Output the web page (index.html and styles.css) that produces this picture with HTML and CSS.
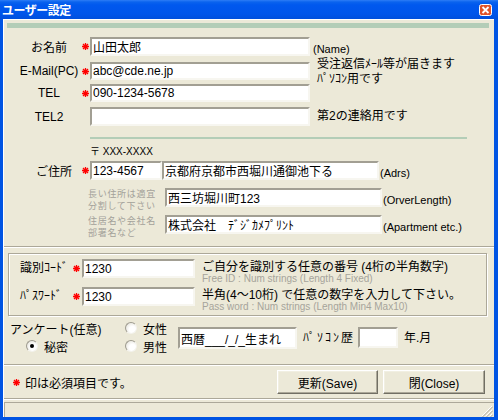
FILE: index.html
```html
<!DOCTYPE html>
<html lang="ja">
<head>
<meta charset="utf-8">
<title>ユーザー設定</title>
<link rel="stylesheet" href="styles.css">
</head>
<body>
<div class="window">
  <div class="titlebar">
    <span class="title">ユーザー設定</span>
    <svg class="close" width="13" height="12" viewBox="0 0 13 12">
      <rect x="0.5" y="0.5" width="12" height="11" rx="2" fill="#E0532B" stroke="#fff"/>
      <path d="M3.5 3L9.5 9M9.5 3L3.5 9" stroke="#fff" stroke-width="1.8"/>
    </svg>
  </div>
  <div class="frame">
    <div class="client">
      <div class="greenbar"></div>

      <div class="row mt9">
        <span class="lbl">お名前</span>
        <span class="req"><svg class="star" width="7" height="7" viewBox="0 0 7 7"><path d="M3.5 0V7M0 3.5H7M1 1L6 6M6 1L1 6" stroke="#f00" stroke-width="1.3"/><circle cx="3.5" cy="3.5" r="1.6" fill="#f00"/></svg></span>
        <input class="tb w220" type="text" value="山田太郎" readonly>
        <span class="note-l">(Name)</span>
      </div>

      <div class="row h18 mt6">
        <span class="lbl">E-Mail(PC)</span>
        <span class="req"><svg class="star" width="7" height="7" viewBox="0 0 7 7"><path d="M3.5 0V7M0 3.5H7M1 1L6 6M6 1L1 6" stroke="#f00" stroke-width="1.3"/><circle cx="3.5" cy="3.5" r="1.6" fill="#f00"/></svg></span>
        <input class="tb w220" type="text" value="abc@cde.ne.jp" readonly>
        <span class="note-j two">受注返信ﾒｰﾙ等が届きます<br>ﾊﾟｿｺﾝ用です</span>
      </div>

      <div class="row h18 mt4">
        <span class="lbl">TEL</span>
        <span class="req"><svg class="star" width="7" height="7" viewBox="0 0 7 7"><path d="M3.5 0V7M0 3.5H7M1 1L6 6M6 1L1 6" stroke="#f00" stroke-width="1.3"/><circle cx="3.5" cy="3.5" r="1.6" fill="#f00"/></svg></span>
        <input class="tb w220" type="text" value="090-1234-5678" readonly>
      </div>

      <div class="row mt5">
        <span class="lbl">TEL2</span>
        <span class="req"></span>
        <input class="tb w220" type="text" value="" readonly>
        <span class="note-j">第2の連絡用です</span>
      </div>

      <div class="greenline"></div>

      <div class="ziplbl">〒 XXX-XXXX</div>

      <div class="row mt3">
        <span class="lbl lbl-addr">ご住所</span>
        <span class="req"><svg class="star" width="7" height="7" viewBox="0 0 7 7"><path d="M3.5 0V7M0 3.5H7M1 1L6 6M6 1L1 6" stroke="#f00" stroke-width="1.3"/><circle cx="3.5" cy="3.5" r="1.6" fill="#f00"/></svg></span>
        <input class="tb w72" type="text" value="123-4567" readonly>
        <input class="tb w217 ml3" type="text" value="京都府京都市西堀川通御池下る" readonly>
        <span class="note-l tight">(Adrs)</span>
      </div>

      <div class="row mt8">
        <span class="hint"><span class="hl">長い住所は適宜</span><span class="hl">分割して下さい</span></span>
        <input class="tb w217" type="text" value="西三坊堀川町123" readonly>
        <span class="note-l tight">(OrverLength)</span>
      </div>

      <div class="row mt8">
        <span class="hint"><span class="hl">住居名や会社名</span><span class="hl">部署名など</span></span>
        <input class="tb w217" type="text" value="株式会社　ﾃﾞｼﾞｶﾒﾌﾟﾘﾝﾄ" readonly>
        <span class="note-l tight">(Apartment etc.)</span>
      </div>

      <div class="sep mt12"></div>

      <div class="idbox">
        <div class="idrow">
          <span class="idlbl">識別ｺｰﾄﾞ</span>
          <span class="req2"><svg class="star" width="7" height="7" viewBox="0 0 7 7"><path d="M3.5 0V7M0 3.5H7M1 1L6 6M6 1L1 6" stroke="#f00" stroke-width="1.3"/><circle cx="3.5" cy="3.5" r="1.6" fill="#f00"/></svg></span>
          <input class="tb w113" type="text" value="1230" readonly>
          <div class="idtext">
            <div class="idmain">ご自分を識別する任意の番号 (4桁の半角数字)</div>
            <div class="idsub">Free ID : Num strings (Length 4 Fixed)</div>
          </div>
        </div>
        <div class="idrow">
          <span class="idlbl">ﾊﾟｽﾜｰﾄﾞ</span>
          <span class="req2"><svg class="star" width="7" height="7" viewBox="0 0 7 7"><path d="M3.5 0V7M0 3.5H7M1 1L6 6M6 1L1 6" stroke="#f00" stroke-width="1.3"/><circle cx="3.5" cy="3.5" r="1.6" fill="#f00"/></svg></span>
          <input class="tb w113" type="text" value="1230" readonly>
          <div class="idtext">
            <div class="idmain">半角(4～10桁) で任意の数字を入力して下さい。</div>
            <div class="idsub">Pass word : Num strings (Length Min4 Max10)</div>
          </div>
        </div>
      </div>

      <div class="survey">
        <div class="scol1">
          <div class="sline">アンケート(任意)</div>
          <div class="sline indent"><span class="radio on"></span><span class="rtext">秘密</span></div>
        </div>
        <div class="scol2">
          <div class="sline"><span class="radio"></span><span class="rtext">女性</span></div>
          <div class="sline"><span class="radio"></span><span class="rtext">男性</span></div>
        </div>
        <input class="tb w119 h22 smt" type="text" value="西暦___/_/_生まれ" readonly>
        <span class="pclbl smt">ﾊﾟｿｺﾝ歴</span>
        <input class="tb w40 h21 smt" type="text" value="" readonly>
        <span class="ym smt">年.月</span>
      </div>

      <div class="sep"></div>

      <div class="footer">
        <svg class="star" width="7" height="7" viewBox="0 0 7 7"><path d="M3.5 0V7M0 3.5H7M1 1L6 6M6 1L1 6" stroke="#f00" stroke-width="1.3"/><circle cx="3.5" cy="3.5" r="1.6" fill="#f00"/></svg>
        <span class="reqnote">印は必須項目です。</span>
        <button class="btn save" type="button">更新(Save)</button>
        <button class="btn closebtn" type="button">閉(Close)</button>
      </div>

      <div class="sep"></div>

      <div class="status">
        <svg class="grip" width="12" height="12" viewBox="0 0 12 12">
          <path d="M11 1L1 11M11 5L5 11M11 9L9 11" stroke="#fff" stroke-width="1"/>
          <path d="M12 1.5L1.5 12M12 5.5L5.5 12M12 9.5L9.5 12" stroke="#ACA899" stroke-width="1"/>
        </svg>
      </div>
    </div>
  </div>
</div>
</body>
</html>
```

FILE: styles.css
```css
html, body {
  margin: 0;
  padding: 0;
}
body {
  width: 498px;
  height: 420px;
  overflow: hidden;
  font-family: "Liberation Sans", "Noto Sans CJK JP", sans-serif;
  font-size: 12px;
  color: #000;
}
.window {
  width: 498px;
  height: 420px;
  display: flex;
  flex-direction: column;
  background: #0054E3;
}
.titlebar {
  height: 19px;
  flex: none;
  display: flex;
  justify-content: space-between;
  padding: 0 6px 0 2px;
  background: linear-gradient(#2D7DF6 0, #0A63EE 2px, #0058EE 5px, #0055EA 14px, #004FDC 19px);
}
.title {
  color: #fff;
  font-weight: bold;
  font-family: "Noto Sans CJK JP", sans-serif;
  font-size: 12px;
  line-height: 19px;
  letter-spacing: -0.5px;
}
.close {
  margin-top: 4px;
  display: block;
}
.frame {
  flex: 1;
  display: flex;
  padding: 0 4px 3px 3px;
  min-height: 0;
}
.client {
  flex: 1;
  min-width: 0;
  background: #ECE9D8;
  border-top: 1px solid #fff;
  border-left: 1px solid #fff;
  display: flex;
  flex-direction: column;
}
.greenbar {
  flex: none;
  margin: 3px 0 0 3px;
  width: 482px;
  height: 5px;
  background: #B3CDB7;
}
.greenline {
  flex: none;
  margin: 11px 0 0 86px;
  width: 377px;
  height: 2px;
  background: #B3CDB7;
}
.row {
  flex: none;
  display: flex;
  align-items: center;
  height: 19px;
  margin-left: 14px;
}
.h18 { height: 18px; }
.mt3 { margin-top: 3px; }
.mt4 { margin-top: 4px; }
.mt5 { margin-top: 5px; }
.mt6 { margin-top: 6px; }
.mt8 { margin-top: 8px; }
.mt9 { margin-top: 9px; }
.mt12 { margin-top: 12px; }
.ml3 { margin-left: 3px; }

.lbl {
  width: 62px;
  flex: none;
  text-align: center;
  white-space: nowrap;
}
.lbl-addr {
  box-sizing: border-box;
  padding-left: 10px;
}
.req {
  width: 10px;
  flex: none;
  display: flex;
  justify-content: center;
}
.star {
  display: block;
  flex: none;
}
.tb {
  flex: none;
  box-sizing: border-box;
  height: 100%;
  margin: 0;
  padding: 0 0 0 1px;
  border: 2px solid;
  border-color: #A29F93 #F7F6F0 #F7F6F0 #A29F93;
  background: #fff;
  font-family: "Liberation Sans", "Noto Sans CJK JP", sans-serif;
  font-size: 12px;
  color: #000;
  outline: none;
}
.w220 { width: 220px; }
.w217 { width: 217px; }
.w72 { width: 72px; }
.w113 { width: 113px; height: 19px; }
.w119 { width: 119px; }
.w40 { width: 40px; }
.h22 { height: 22px; }
.h21 { height: 21px; }

.note-l {
  align-self: flex-end;
  margin-left: 3px;
  font-size: 11px;
  line-height: 13px;
  white-space: nowrap;
}
.note-l.tight { margin-left: 1px; }
.note-j {
  margin-left: 7px;
  font-size: 12px;
  line-height: 15px;
  white-space: nowrap;
}
.note-j.two { margin-top: 2px; }

.ziplbl {
  flex: none;
  margin: 6px 0 0 86px;
  height: 13px;
  font-size: 10px;
  line-height: 13px;
}
.hint {
  flex: none;
  align-self: flex-start;
  width: 77px;
  margin: 0 0 0 70px;
  display: flex;
  flex-direction: column;
  font-family: "Noto Sans CJK JP", sans-serif;
  font-size: 9px;
  color: #A3A19A;
  white-space: nowrap;
}
.hl {
  display: block;
  height: 12px;
  line-height: 12px;
  letter-spacing: 0.7px;
}

.sep {
  flex: none;
  height: 0;
  border-top: 1px solid #ACA899;
  border-bottom: 1px solid #fff;
}

.idbox {
  flex: none;
  box-sizing: border-box;
  margin: 5px 0 0 4px;
  width: 479px;
  padding: 5px 0 4px 0;
  border: 1px solid #ACA899;
  box-shadow: inset 1px 1px #fff, 1px 1px #fff;
}
.idrow {
  display: flex;
  align-items: flex-start;
  height: 24px;
}
.idrow + .idrow { margin-top: 4px; }
.idlbl {
  flex: none;
  box-sizing: border-box;
  width: 61px;
  padding-left: 11px;
  line-height: 19px;
  white-space: nowrap;
}
.req2 {
  flex: none;
  width: 12px;
  height: 19px;
  display: flex;
  align-items: center;
  justify-content: center;
}
.idtext {
  margin: 2px 0 0 7px;
  white-space: nowrap;
}
.idmain {
  font-size: 12px;
  line-height: 13px;
}
.idsub {
  font-size: 10px;
  line-height: 9px;
  color: #A6A49B;
}

.survey {
  flex: none;
  box-sizing: border-box;
  height: 48px;
  padding: 3px 0 9px 6px;
  display: flex;
  align-items: flex-start;
}
.scol1 { width: 115px; flex: none; }
.scol2 { width: 53px; flex: none; }
.sline {
  height: 18px;
  display: flex;
  align-items: center;
  white-space: nowrap;
}
.indent { padding-left: 16px; }
.radio {
  flex: none;
  box-sizing: border-box;
  width: 12px;
  height: 12px;
  border-radius: 50%;
  border: 1px solid;
  border-color: #9E9B8F #F4F3EE #F4F3EE #9E9B8F;
  background: radial-gradient(circle at 65% 65%, #fff 0, #fff 35%, #DDDBD0 100%);
  display: flex;
  align-items: center;
  justify-content: center;
}
.radio.on::after {
  content: "";
  width: 4px;
  height: 4px;
  border-radius: 50%;
  background: #000;
}
.rtext { margin-left: 6px; }
.smt { margin-top: 8px; }
.pclbl {
  flex: none;
  width: 55px;
  margin-left: 6px;
  line-height: 22px;
  letter-spacing: 2px;
  white-space: nowrap;
}
.ym {
  margin-left: 6px;
  line-height: 22px;
  white-space: nowrap;
}

.footer {
  flex: none;
  box-sizing: border-box;
  height: 32px;
  padding: 0 9px;
  display: flex;
  align-items: center;
}
.reqnote { margin-left: 5px; }
.btn {
  flex: none;
  box-sizing: border-box;
  width: 101px;
  height: 24px;
  margin: 0;
  padding: 0;
  border: 1px solid;
  border-color: #fff #716F64 #716F64 #fff;
  box-shadow: inset -1px -1px #ACA899, inset 1px 1px #F1EFE2;
  background: #ECE9D8;
  font-family: "Liberation Sans", "Noto Sans CJK JP", sans-serif;
  font-size: 12px;
  color: #000;
}
.save { margin-left: auto; }
.closebtn { width: 102px; margin-left: 5px; }

.status {
  flex: none;
  box-sizing: border-box;
  margin-top: 2px;
  height: 15px;
  border-top: 1px solid #ACA899;
  border-left: 1px solid #ACA899;
  display: flex;
  justify-content: flex-end;
  align-items: flex-end;
  padding-right: 1px;
}
.grip { display: block; }
```
